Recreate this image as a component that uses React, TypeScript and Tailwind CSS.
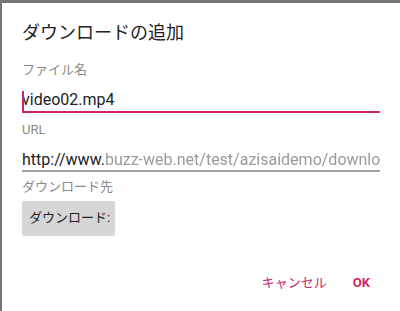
import React from 'react';

const font = { fontFamily: 'Roboto, "Noto Sans CJK JP", sans-serif' };

export default function App() {
  return (
    <div
      className="w-[400px] h-[311px] bg-white border-t-[3px] border-l-[2px] border-[#757575] overflow-hidden flex flex-col"
      style={font}
    >
      <div className="pl-[20px] pr-[20px] flex flex-col">
        <h1 className="mt-[18px] text-[18px] leading-[24px] text-[#222]">ダウンロードの追加</h1>

        <label className="mt-[17px] text-[13px] leading-[16px] text-[#8a8a8a]">ファイル名</label>
        <div className="mt-[11px] h-[24px] flex items-center border-b-2 border-[#d0246a] relative">
          <span className="absolute left-0 top-[2px] w-[2px] h-[20px] bg-[#d0246a]" />
          <span className="text-[16px] leading-[20px] text-[#222]">video02.mp4</span>
        </div>

        <label className="mt-[9px] text-[13px] leading-[16px] text-[#8a8a8a]">URL</label>
        <div className="mt-[12px] h-[22px] flex items-center border-b-2 border-[#a0a0a0] overflow-hidden whitespace-nowrap">
          <span className="text-[16px] leading-[20px] text-[#222]">http://www.</span>
          <span className="text-[16px] leading-[20px] text-[#9a9a9a] blur-[0.6px]">buzz-web.net/test/azisaidemo/download</span>
        </div>

        <label className="mt-[7px] text-[13px] leading-[16px] text-[#8a8a8a]">ダウンロード先</label>
        <div className="mt-[6px] flex">
          <button className="w-[93px] h-[34px] bg-[#d6d6d6] rounded-[2px] shadow-[0_1px_1px_rgba(0,0,0,0.15)] text-[13px] text-[#222] text-left pl-[7px]">
            ダウンロード:
          </button>
        </div>
      </div>

      <div className="mt-auto mb-[19px] flex justify-end items-center gap-[26px] pr-[30px]">
        <span className="text-[13px] leading-[18px] text-[#d0246a]">キャンセル</span>
        <span className="text-[13px] leading-[18px] font-bold text-[#d0246a]">OK</span>
      </div>
    </div>
  );
}
